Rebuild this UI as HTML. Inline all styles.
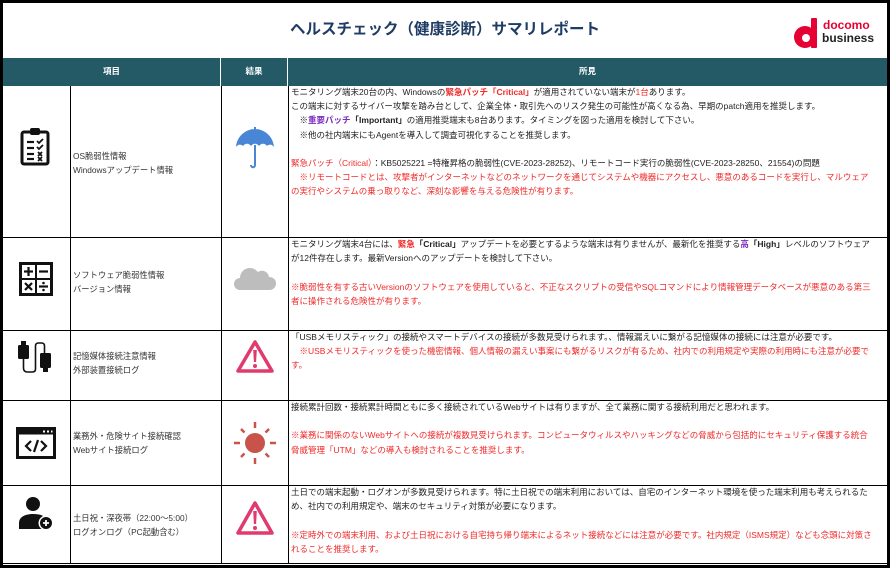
<!DOCTYPE html>
<html><head><meta charset="utf-8"><style>
*{margin:0;padding:0;box-sizing:border-box}
body{width:890px;height:568px;background:#fff;font-family:"Liberation Sans","Noto Sans CJK JP",sans-serif;position:relative;overflow:hidden;color:#222}
.a{position:absolute}
.title{left:0;width:890px;top:17px;text-align:center;font-size:15.5px;font-weight:bold;color:#1f3c64}
.hdr{top:58px;height:28px;background:#235a66;color:#fff;font-size:8.5px;font-weight:bold;text-align:center;line-height:26px}
.vl{width:1px;background:#000}
.hl{height:1px;background:#000;left:3px;width:884px}
.lab{font-size:8.3px;line-height:14px;color:#333;left:73px}
.f{left:291px;width:595px;font-size:8.5px;line-height:14.2px;color:#222;white-space:nowrap;overflow:hidden}
.r{color:#f02a2a}
.b{font-weight:bold;color:#222}
.rb{font-weight:bold;color:#f02a2a}
.p{color:#7a2bbd;font-weight:bold}
</style></head><body>
<div class="a" style="left:0;top:0;width:890px;height:3px;background:#000"></div>
<div class="a" style="left:0;top:0;width:3px;height:568px;background:#000"></div>
<div class="a" style="left:887px;top:0;width:3px;height:568px;background:#000"></div>
<div class="a title">ヘルスチェック（健康診断）サマリレポート</div>
<svg class="a" style="left:792px;top:16px" width="32" height="34" viewBox="0 0 32 34"><circle cx="13" cy="21" r="11" fill="#e60033"/><circle cx="14" cy="22" r="4" fill="#fff"/><rect x="19" y="2" width="6" height="30" rx="1" fill="#e60033"/></svg>
<div class="a" style="left:823px;top:20px;font-size:12px;line-height:11px;font-weight:bold;color:#e60033">docomo</div>
<div class="a" style="left:822px;top:32px;font-size:12px;line-height:12px;font-weight:bold;color:#222">business</div>
<div class="a hdr" style="left:3px;width:217px">項目</div>
<div class="a hdr" style="left:221px;width:66px">結果</div>
<div class="a hdr" style="left:288px;width:599px">所見</div>
<div class="a" style="left:220px;top:58px;width:1px;height:28px;background:#fff"></div>
<div class="a" style="left:287px;top:58px;width:1px;height:28px;background:#fff"></div>
<div class="a vl" style="left:70px;top:86px;height:478px"></div>
<div class="a vl" style="left:221px;top:86px;height:478px"></div>
<div class="a vl" style="left:288px;top:86px;height:478px"></div>
<div class="a hl" style="top:237px"></div>
<div class="a hl" style="top:330px"></div>
<div class="a hl" style="top:400px"></div>
<div class="a hl" style="top:485px"></div>
<div class="a" style="left:0;top:563px;width:890px;height:1px;background:#000"></div>
<div class="a" style="left:0;top:565px;width:890px;height:3px;background:#000"></div>
<svg class="a" style="left:20px;top:127px" width="32" height="40" viewBox="0 0 32 40"><rect x="2" y="5" width="26" height="32" rx="2" fill="none" stroke="#111" stroke-width="3"/><rect x="10" y="1" width="10" height="7" rx="2" fill="#111"/><g stroke="#111" stroke-width="2.2"><line x1="7" y1="15" x2="14" y2="15"/><line x1="7" y1="21" x2="14" y2="21"/><line x1="7" y1="27" x2="14" y2="27"/><line x1="7" y1="32" x2="14" y2="32"/></g><g stroke="#111" stroke-width="1.8" fill="none"><path d="M17 14l2 2 4-4"/><path d="M17 20l2 2 4-4"/><path d="M18 25l4 4M22 25l-4 4"/><path d="M18 30l4 4M22 30l-4 4"/></g></svg>
<svg class="a" style="left:18px;top:261px" width="36" height="36" viewBox="0 0 36 36"><rect x="1" y="1" width="34" height="34" fill="#111"/><rect x="4" y="4" width="13" height="13" fill="#fff"/><rect x="19" y="4" width="13" height="13" fill="#fff"/><rect x="4" y="19" width="13" height="13" fill="#fff"/><rect x="19" y="19" width="13" height="13" fill="#fff"/><g stroke="#111" stroke-width="2.2"><line x1="6" y1="10.5" x2="15" y2="10.5"/><line x1="10.5" y1="6" x2="10.5" y2="15"/><line x1="21" y1="10.5" x2="30" y2="10.5"/><line x1="7" y1="22" x2="14" y2="29"/><line x1="14" y1="22" x2="7" y2="29"/><line x1="21" y1="25.5" x2="30" y2="25.5"/></g><circle cx="25.5" cy="22" r="1.3" fill="#111"/><circle cx="25.5" cy="29" r="1.3" fill="#111"/></svg>
<svg class="a" style="left:16px;top:339px" width="38" height="38" viewBox="0 0 38 38"><rect x="5" y="2" width="5" height="5" fill="#111"/><rect x="2" y="6" width="11" height="14" rx="1.5" fill="#111"/><path d="M7.5 20v9q0 4 4 4h5q3 0 3-3V7q0-3 3-3h3q3 0 3 3v8" fill="none" stroke="#111" stroke-width="1.6"/><rect x="24" y="14" width="11" height="15" rx="1.5" fill="#111"/><rect x="27" y="28" width="5" height="5" fill="#111"/></svg>
<svg class="a" style="left:16px;top:427px" width="40" height="32" viewBox="0 0 40 32"><rect x="1.5" y="1.5" width="37" height="29" fill="none" stroke="#111" stroke-width="3"/><rect x="1.5" y="1.5" width="37" height="6" fill="#111"/><g fill="#fff"><rect x="27" y="3.5" width="2" height="2"/><rect x="31" y="3.5" width="2" height="2"/><rect x="35" y="3.5" width="1.5" height="2"/></g><path d="M15 14l-5 5 5 5M25 14l5 5-5 5M22 13l-4 12" fill="none" stroke="#111" stroke-width="2.2"/></svg>
<svg class="a" style="left:18px;top:496px" width="38" height="36" viewBox="0 0 38 36"><circle cx="15" cy="8" r="7" fill="#111"/><path d="M1 33v-6c0-6 6-9 14-9s11 2 12 4v11z" fill="#111"/><circle cx="28" cy="27" r="7.5" fill="#fff"/><circle cx="28" cy="27" r="6" fill="#111"/><path d="M25 27h6M28 24v6" stroke="#fff" stroke-width="1.8"/></svg>
<div class="a lab" style="top:149px">OS脆弱性情報<br>Windowsアップデート情報</div>
<div class="a lab" style="top:268px">ソフトウェア脆弱性情報<br>バージョン情報</div>
<div class="a lab" style="top:349px">記憶媒体接続注意情報<br>外部装置接続ログ</div>
<div class="a lab" style="top:429px">業務外・危険サイト接続確認<br>Webサイト接続ログ</div>
<div class="a lab" style="top:511px">土日祝・深夜帯（22:00～5:00）<br>ログオンログ（PC起動含む）</div>
<svg class="a" style="left:234px;top:127px" width="42" height="42" viewBox="0 0 42 42"><path d="M2 20C3 8 13 2 21 2s18 6 19 18c-2-3-5-3-7-1-2-3-6-3-8 0-2-3-6-3-8 0-2-3-6-3-8 0-2-2-5-2-7 1z" fill="#4a86d6"/><rect x="20" y="0" width="2" height="3" fill="#4a86d6"/><path d="M21 18v20c0 3-4 3-4 0" fill="none" stroke="#4a86d6" stroke-width="2"/></svg>
<svg class="a" style="left:234px;top:265px" width="42" height="26" viewBox="0 0 42 26"><path d="M6 25a6 6 0 0 1 0-12 10 10 0 0 1 18-6 7 7 0 0 1 11 5 6.5 6.5 0 0 1 1 13z" fill="#bdbdbd"/></svg>
<svg class="a" style="left:236px;top:339px" width="38" height="34" viewBox="0 0 38 34"><path d="M19 3L2 32h34z" fill="none" stroke="#e03a6e" stroke-width="3.5" stroke-linejoin="round"/><path d="M17.2 11h3.6l-.7 12h-2.2z" fill="#e03a6e"/><circle cx="19" cy="27" r="2" fill="#e03a6e"/></svg>
<svg class="a" style="left:233px;top:421px" width="44" height="44" viewBox="0 0 44 44"><circle cx="22" cy="22" r="10" fill="#c8534a"/><g stroke="#c8534a" stroke-width="2.5"><line x1="22" y1="1" x2="22" y2="7"/><line x1="22" y1="37" x2="22" y2="43"/><line x1="1" y1="22" x2="7" y2="22"/><line x1="37" y1="22" x2="43" y2="22"/><line x1="8" y1="8" x2="11.5" y2="11.5"/><line x1="32.5" y1="32.5" x2="36" y2="36"/><line x1="36" y1="8" x2="32.5" y2="11.5"/><line x1="8" y1="36" x2="11.5" y2="32.5"/></g></svg>
<svg class="a" style="left:236px;top:500px" width="38" height="36" viewBox="0 0 38 36"><path d="M19 3L2 33h34z" fill="none" stroke="#e03a6e" stroke-width="3.5" stroke-linejoin="round"/><path d="M17.2 11h3.6l-.7 13h-2.2z" fill="#e03a6e"/><circle cx="19" cy="28" r="2" fill="#e03a6e"/></svg>
<div class="a f" style="top:85px">モニタリング端末20台の内、Windowsの<span class="rb">緊急パッチ「Critical」</span>が適用されていない端末が<span class="r">1台</span>あります。<br>この端末に対するサイバー攻撃を踏み台として、企業全体・取引先へのリスク発生の可能性が高くなる為、早期のpatch適用を推奨します。<br>　※<span class="p">重要パッチ</span><b>「Important」</b>の適用推奨端末も8台あります。タイミングを図った適用を検討して下さい。<br>　※他の社内端末にもAgentを導入して調査可視化することを推奨します。<br><br><span class="r">緊急パッチ（Critical）</span>：KB5025221 =特権昇格の脆弱性(CVE-2023-28252)、リモートコード実行の脆弱性(CVE-2023-28250、21554)の問題<br><span class="r">　※リモートコードとは、攻撃者がインターネットなどのネットワークを通じてシステムや機器にアクセスし、悪意のあるコードを実行し、マルウェア<br>の実行やシステムの乗っ取りなど、深刻な影響を与える危険性が有ります。</span></div>
<div class="a f" style="top:237px">モニタリング端末4台には、<span class="rb">緊急</span><b>「Critical」</b>アップデートを必要とするような端末は有りませんが、最新化を推奨する<span class="p">高</span><b>「High」</b>レベルのソフトウェア<br>が12件存在します。最新Versionへのアップデートを検討して下さい。<br><br><span class="r">※脆弱性を有する古いVersionのソフトウェアを使用していると、不正なスクリプトの受信やSQLコマンドにより情報管理データベースが悪意のある第三<br>者に操作される危険性が有ります。</span></div>
<div class="a f" style="top:330px">「USBメモリスティック」の接続やスマートデバイスの接続が多数見受けられます。、情報漏えいに繋がる記憶媒体の接続には注意が必要です。<br><span class="r">　※USBメモリスティックを使った機密情報、個人情報の漏えい事案にも繋がるリスクが有るため、社内での利用規定や実際の利用時にも注意が必要で<br>す。</span></div>
<div class="a f" style="top:400px">接続累計回数・接続累計時間ともに多く接続されているWebサイトは有りますが、全て業務に関する接続利用だと思われます。<br><br><span class="r">※業務に関係のないWebサイトへの接続が複数見受けられます。コンピュータウィルスやハッキングなどの脅威から包括的にセキュリティ保護する統合<br>脅威管理「UTM」などの導入も検討されることを推奨します。</span></div>
<div class="a f" style="top:485px">土日での端末起動・ログオンが多数見受けられます。特に土日祝での端末利用においては、自宅のインターネット環境を使った端末利用も考えられるた<br>め、社内での利用規定や、端末のセキュリティ対策が必要になります。<br><br><span class="r">※定時外での端末利用、および土日祝における自宅持ち帰り端末によるネット接続などには注意が必要です。社内規定（ISMS規定）なども念頭に対策さ<br>れることを推奨します。</span></div>
</body></html>
